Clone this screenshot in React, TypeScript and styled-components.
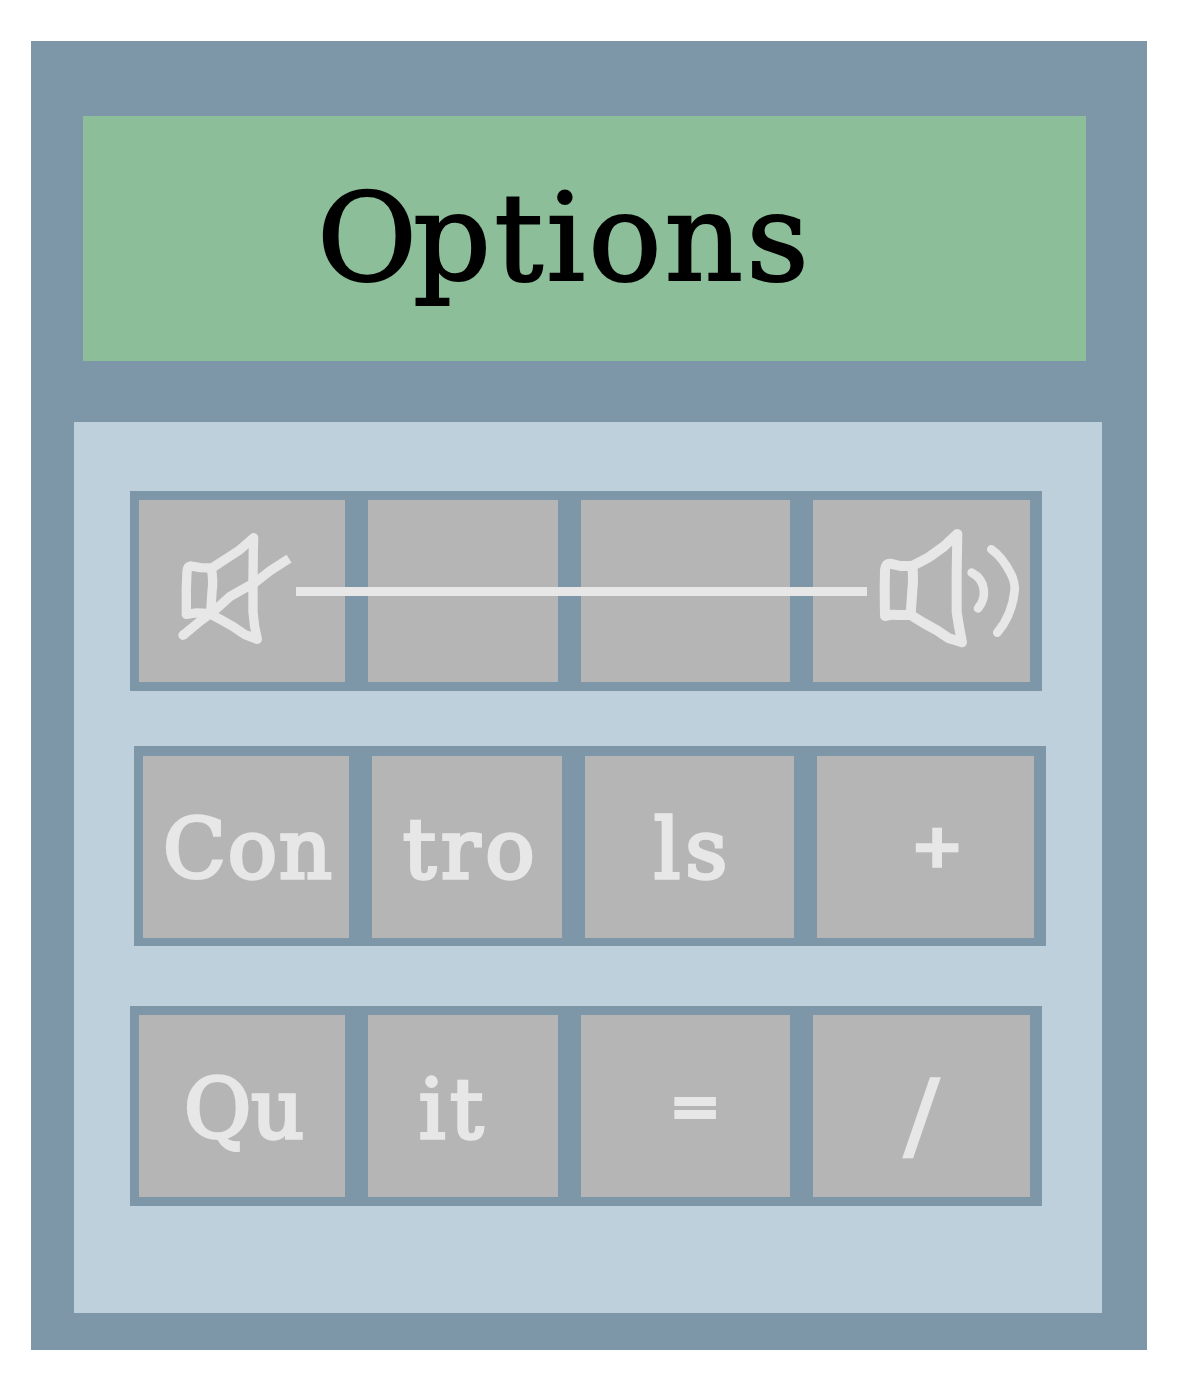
import React from "react";
import styled, { createGlobalStyle } from "styled-components";

const color = {
  frame: "#7d97a9",
  display: "#8cbe9a",
  panel: "#bed0dc",
  key: "#b5b5b5",
  ink: "#e7e7e7",
};

const GlobalStyle = createGlobalStyle`
  body { margin: 0; background: #fff; }
  *, *::before, *::after { box-sizing: border-box; }
`;

const Page = styled.main`
  width: 1182px;
  height: 1389px;
  padding: 41px 35px 39px 31px;
  overflow: hidden;
  font-family: "DejaVu Serif", "Liberation Serif", serif;
`;

const Frame = styled.div`
  height: 1309px;
  padding: 75px 45px 37px 43px;
  background: ${color.frame};
  display: flex;
  flex-direction: column;
`;

const Display = styled.header`
  width: 1003px;
  height: 245px;
  margin: 0 0 61px 9px;
  padding: 47px 0 0 234px;
  background: ${color.display};
`;

const Title = styled.h1`
  margin: 0;
  width: max-content;
  font-size: 122px;
  line-height: 150px;
  font-weight: 400;
  letter-spacing: 3px;
  color: #000;
  -webkit-text-stroke: 2px #000;

  &::first-letter {
    letter-spacing: -4px;
  }
`;

const Panel = styled.section`
  flex: 1;
  padding: 69px 0 0 56px;
  background: ${color.panel};
  display: flex;
  flex-direction: column;
`;

const Row = styled.div<{ $shift?: number; $gap?: number; $top?: number }>`
  position: relative;
  width: 912px;
  height: 200px;
  margin: 0 0 ${(p) => p.$gap ?? 0}px ${(p) => p.$shift ?? 0}px;
  padding: ${(p) => p.$top ?? 9}px 12px 0 9px;
  background: ${color.frame};
  display: grid;
  grid-template-columns: 206px 190px 209px 217px;
  grid-template-rows: 182px;
  column-gap: 23px;
`;

const Key = styled.div<{ $x?: number; $y?: number }>`
  padding: ${(p) => p.$y ?? 0}px 0 0 ${(p) => p.$x ?? 0}px;
  background: ${color.key};
  min-width: 0;
`;

const Label = styled.span<{
  $size?: number;
  $spacing?: number;
  $sx?: number;
  $sy?: number;
  $weight?: number;
}>`
  display: block;
  width: max-content;
  font-size: ${(p) => p.$size ?? 82}px;
  line-height: 100px;
  letter-spacing: ${(p) => p.$spacing ?? 0}px;
  color: ${color.ink};
  -webkit-text-stroke: ${(p) => p.$weight ?? 3.5}px ${color.ink};
  transform: scale(${(p) => p.$sx ?? 1}, ${(p) => p.$sy ?? 1});
  transform-origin: left center;
`;

const Track = styled.div`
  position: absolute;
  left: 166px;
  top: 96px;
  width: 571px;
  height: 9px;
  background: ${color.ink};
`;

const Icon = styled.svg`
  display: block;
  fill: none;
  stroke: ${color.ink};
  stroke-linecap: round;
  stroke-linejoin: round;
`;

const MutedIcon = () => (
  <Icon width="116.67" height="116.67" viewBox="50 60 350 350" strokeWidth="28">
    <path d="M92 168Q81 169 80 185L78 235L78 313L105 309L146 310L180 328L215 348L254 374L291 388L283 350L278 305V205L279 115L280 83L235 122L190 151L155 174L120 173L92 168Z" />
    <path d="M153 174Q160 215 155 245L151 310" />
    <path d="M68 376L120 333L160 304L210 259L240 242L285 217L330 182L386 146" strokeLinecap="butt" />
    <path d="M68 376L70 374" />
  </Icon>
);

const SpeakerIcon = () => (
  <Icon width="146.67" height="125" viewBox="80 45 440 375" strokeWidth="30">
    <path d="M120 161Q106 160 104 180L103 240L104 318L125 314L150 315L180 314L220 339L260 361L296 385L335 397L326 350L319 305V190L321 72L280 110L235 142L186 168L150 168L120 161Z" />
    <path d="M186 168Q190 210 186 240L181 314" />
    <path d="M364 188C412 213 407 267 383 295" strokeWidth="26" />
    <path d="M423 118Q456 140 482 192Q495 218 493 240Q486 315 441 368" strokeWidth="26" />
  </Icon>
);

export default function App() {
  return (
    <Page>
      <GlobalStyle />
      <Frame>
        <Display>
          <Title>Options</Title>
        </Display>
        <Panel>
          <Row $gap={55}>
            <Key $x={37.67} $y={30}><MutedIcon /></Key>
            <Key />
            <Key />
            <Key $x={63.67} $y={25}><SpeakerIcon /></Key>
            <Track />
          </Row>
          <Row $shift={4} $gap={60} $top={10}>
            <Key $x={20} $y={44}><Label $spacing={2}>Con</Label></Key>
            <Key $x={31} $y={44}><Label $spacing={5}>tro</Label></Key>
            <Key $x={69} $y={44}><Label $spacing={5}>ls</Label></Key>
            <Key $x={95} $y={40}><Label $size={60} $weight={5} $sy={0.92}>+</Label></Key>
          </Row>
          <Row>
            <Key $x={45} $y={45}><Label>Qu</Label></Key>
            <Key $x={51} $y={45}><Label $spacing={5}>it</Label></Key>
            <Key $x={89} $y={41}><Label $size={60} $weight={4} $sy={1.06}>=</Label></Key>
            <Key $x={91} $y={50}><Label $sx={1.27} $sy={1.17} $weight={2}>/</Label></Key>
          </Row>
        </Panel>
      </Frame>
    </Page>
  );
}
